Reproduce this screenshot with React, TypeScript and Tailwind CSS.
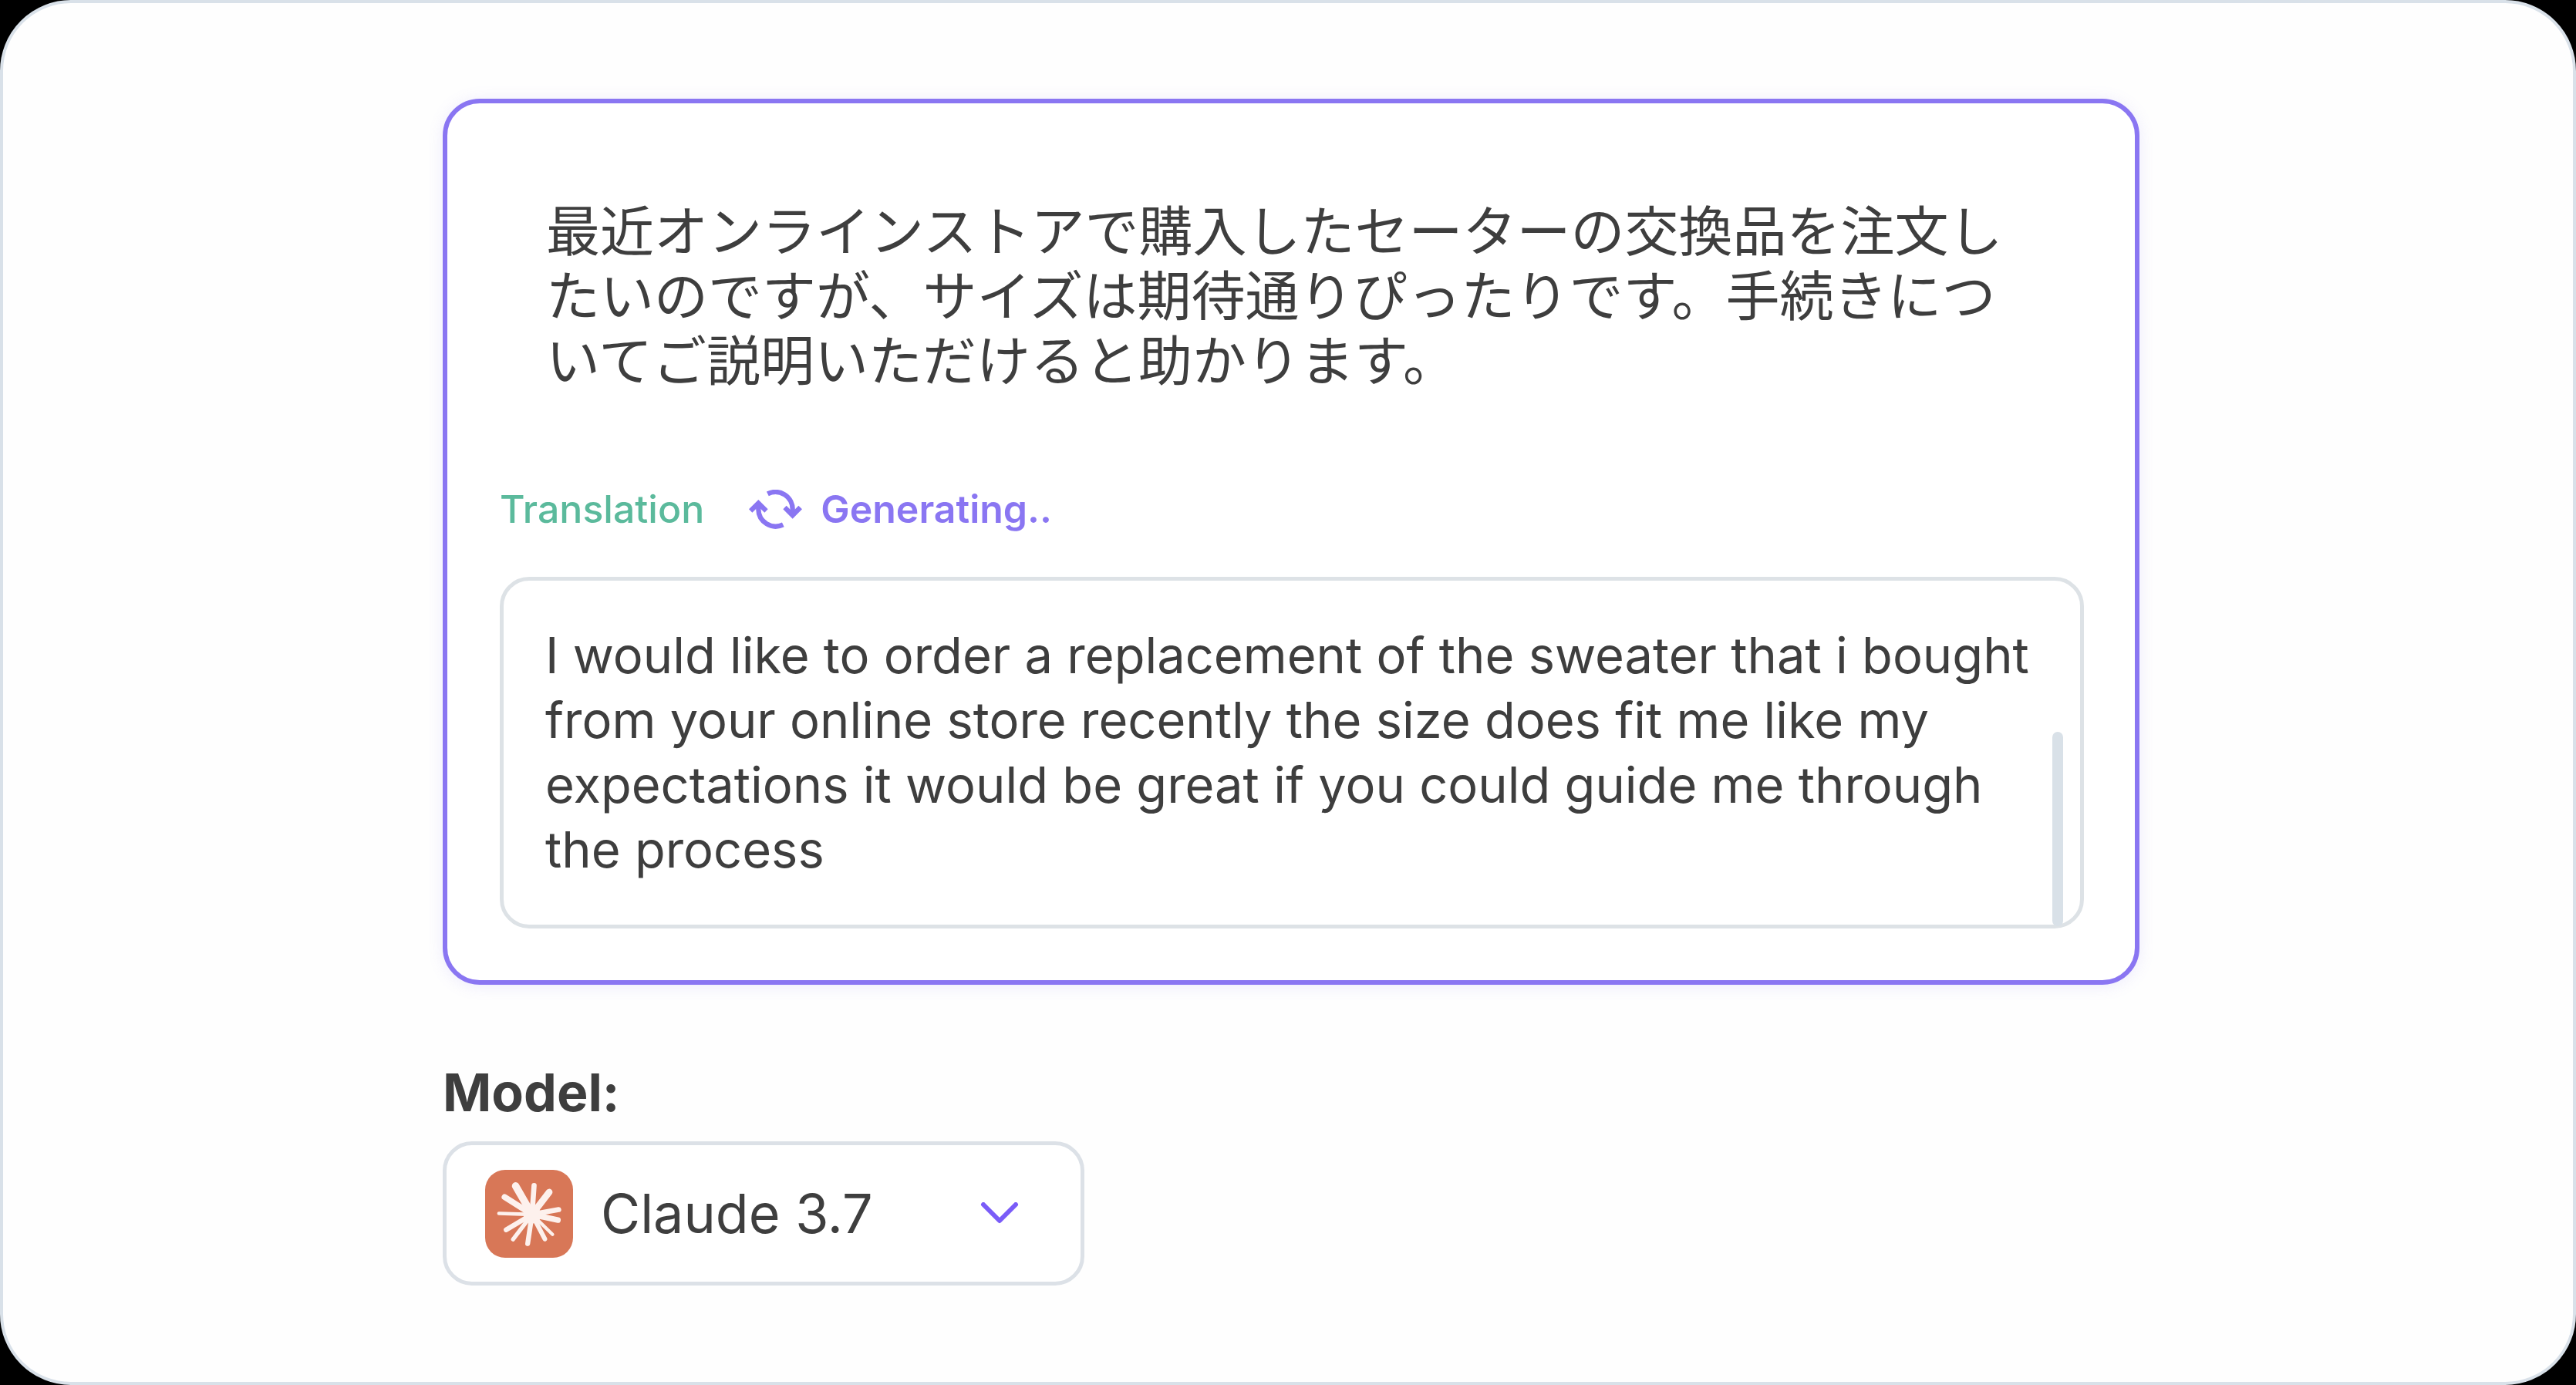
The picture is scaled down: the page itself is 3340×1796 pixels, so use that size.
import { useState } from 'react';

const SOURCE_TEXT =
  '最近オンラインストアで購入したセーターの交換品を注文したいのですが、サイズは期待通りぴったりです。手続きについてご説明いただけると助かります。';

const TRANSLATION =
  'I would like to order a replacement of the sweater that i bought from your online store recently the size does fit me like my expectations it would be great if you could guide me through the process';

// tip x, tip y, stroke width
const RAYS = [
  [119, 63, 29],
  [191, 61, 20],
  [250, 87, 26],
  [287, 155, 20],
  [284, 196, 22],
  [263, 252, 13],
  [233, 270, 18],
  [166, 288, 19],
  [109, 271, 16],
  [82, 234, 19],
  [54, 170, 14],
  [76, 106, 23],
];

function RefreshIcon() {
  return (
    <svg viewBox="57 46 207 153" className="w-[69px] h-[51px] shrink-0" fill="none" aria-hidden="true">
      <path d="M130 62A67 67 0 0 1 227 123V138M190 182A67 67 0 0 1 94 122V106" stroke="#8a76f2" strokeWidth="19" />
      <path d="M227 159L190 122L203 108L227 132L250 108L264 122ZM94 85L57 122L70 135L94 112L118 135L131 122Z" fill="#8a76f2" />
    </svg>
  );
}

function ClaudeIcon() {
  return (
    <svg viewBox="0 0 343 343" className="w-[114px] h-[114px] shrink-0" aria-hidden="true">
      <rect width="343" height="343" rx="78" fill="#d87757" />
      <g stroke="#fdf1ed" strokeLinecap="round">
        {RAYS.map(([x, y, w]) => (
          <line key={`${x}-${y}`} x1="183" y1="174" x2={x} y2={y} strokeWidth={w} />
        ))}
      </g>
      <circle cx="184" cy="175" r="34" fill="#fdf1ed" />
    </svg>
  );
}

function TranslationCard() {
  return (
    <section className="border-6 border-[#8a76f2] rounded-[48px] bg-white pl-[68px] pr-[66px] pt-[120px] pb-[67px] shadow-[0_2px_20px_rgba(138,118,242,0.14)]">
      <p
        lang="ja"
        className="px-[60px] text-[70px] leading-[84px] font-['Noto_Sans_CJK_JP',sans-serif]"
      >
        {SOURCE_TEXT}
      </p>

      <div className="flex items-center mt-[114px] mb-[48px] text-[50px] leading-[80px]">
        <label htmlFor="translation" className="text-[#5bba9c] font-medium">Translation</label>
        <div className="flex items-center gap-6 ml-[58px] text-[#8a76f2] font-semibold" role="status">
          <RefreshIcon />
          <span>Generating..</span>
        </div>
      </div>

      <div className="relative">
        <textarea
          id="translation"
          rows={4}
          readOnly
          defaultValue={TRANSLATION}
          className="block w-full resize-none overflow-hidden outline-none border-5 border-[#dde2e6] rounded-[38px] bg-white pl-[54px] pr-[60px] py-[55px] text-[65px] leading-[84px]"
        />
        {/* Scroll thumb */}
        <div className="absolute right-[27px] bottom-[3px] w-[14px] h-[252px] rounded-full bg-[#d9e1e8]" />
      </div>
    </section>
  );
}

function ModelPicker() {
  const [model, setModel] = useState('claude-3.7');

  return (
    <div className="mt-[97px] flex flex-col items-start">
      <label htmlFor="model" className="text-[68px] leading-[84px] font-bold">Model:</label>
      <div className="mt-[22px] flex items-center w-[832px] h-[187px] border-5 border-[#dce1e7] rounded-[38px] bg-white pl-[50px] pr-[80px]">
        <ClaudeIcon />
        <select
          id="model"
          value={model}
          onChange={e => setModel(e.target.value)}
          className="flex-1 appearance-none bg-transparent outline-none ml-[36px] text-[70px] leading-[84px]"
        >
          <option value="claude-3.7">Claude 3.7</option>
        </select>
        <svg viewBox="0 0 50 30" className="w-[50px] h-[30px] shrink-0" fill="none" aria-hidden="true">
          <path d="M4 3L25 24L46 3" stroke="#7a5cf8" strokeWidth="6" strokeLinecap="round" strokeLinejoin="round" />
        </svg>
      </div>
    </div>
  );
}

export default function App() {
  return (
    <div className="min-h-screen bg-black flex">
      <main className="flex-1 border-4 border-[#d9e1e9] rounded-[92px] bg-[#fefefe] pl-2 pt-[124px] pb-[124px] text-[#3e3e3e] font-['Inter',sans-serif]">
        <div className="max-w-[2200px] mx-auto">
          <TranslationCard />
          <ModelPicker />
        </div>
      </main>
    </div>
  );
}
